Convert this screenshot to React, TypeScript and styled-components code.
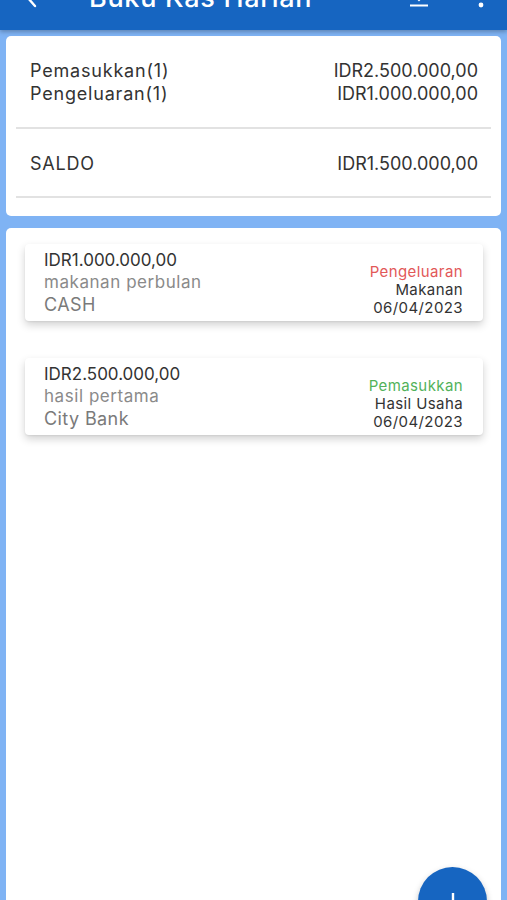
import styled, { createGlobalStyle } from 'styled-components'

const GlobalStyle = createGlobalStyle`
  html, body {
    margin: 0;
    padding: 0;
    height: 100%;
    overflow: hidden;
  }
  body {
    background: #7fb3f4;
    font-family: Inter, "Noto Sans", sans-serif;
    color: #333333;
  }
`

const AppBar = styled.header`
  height: 64px;
  margin-top: -34px;
  background: #1665c1;
  display: flex;
  align-items: center;
  padding: 0 14px 0 20px;
  box-shadow: 0 2px 4px rgba(0, 0, 0, 0.25);
  color: #ffffff;
  position: relative;
  z-index: 2;

  h1 {
    flex: 1;
    margin: 0 0 0 45px;
    font-size: 27px;
    font-weight: 500;
    letter-spacing: 0.7px;
    line-height: 30px;
  }
`

const IconButton = styled.span<{ $gap?: number }>`
  display: flex;
  width: 24px;
  height: 24px;
  margin-left: ${(p) => p.$gap ?? 0}px;
`

const Page = styled.main`
  padding: 6px 6px 0;
  display: flex;
  flex-direction: column;
  gap: 12px;
`

const Card = styled.section`
  background: #ffffff;
  border-radius: 5px;
  padding: 0 10px;
`

const SummaryBlock = styled.div<{ $last?: boolean }>`
  padding: 23px 13px ${(p) => (p.$last ? 21 : 22)}px 14px;
  border-bottom: 2px solid #e2e2e2;
  margin-bottom: ${(p) => (p.$last ? 18 : 0)}px;
`

const SummaryRow = styled.div`
  display: flex;
  justify-content: space-between;
  font-size: 18px;
  line-height: 23px;
  color: #333333;
`

const Label = styled.span`
  letter-spacing: 0.8px;
`

const ListCard = styled(Card)`
  padding: 16px 18px 0 19px;
  min-height: 720px;
  display: flex;
  flex-direction: column;
  gap: 37px;
`

const Item = styled.article`
  display: flex;
  justify-content: space-between;
  align-items: flex-end;
  padding: 5px 20px 5px 19px;
  border-radius: 4px;
  background: #ffffff;
  box-shadow: 0 4px 8px rgba(0, 0, 0, 0.18), 0 1px 2px rgba(0, 0, 0, 0.06);
`

const ItemLeft = styled.div`
  display: flex;
  flex-direction: column;
`

const Amount = styled.span`
  font-size: 17px;
  line-height: 22px;
  color: #333333;
`

const Note = styled.span`
  font-size: 17px;
  line-height: 22px;
  letter-spacing: 0.55px;
  color: #8a8a8a;
`

const Account = styled.span`
  font-size: 18px;
  line-height: 23px;
  letter-spacing: 0.4px;
  color: #7a7a7a;
`

const ItemRight = styled.div`
  display: flex;
  flex-direction: column;
  align-items: flex-end;
  font-size: 15px;
  line-height: 18px;
  letter-spacing: 0.4px;
  margin-bottom: -1px;
`

const Kind = styled.span<{ $income?: boolean }>`
  color: ${(p) => (p.$income ? '#52b25a' : '#e25858')};
`

const Fab = styled.button`
  position: fixed;
  right: 20px;
  bottom: -36px;
  width: 69px;
  height: 69px;
  border-radius: 50%;
  border: none;
  background: #1665c1;
  display: flex;
  align-items: center;
  justify-content: center;
  box-shadow: 0 3px 6px rgba(0, 0, 0, 0.25);
`

const transactions = [
  {
    id: 1,
    amount: 'IDR1.000.000,00',
    note: 'makanan perbulan',
    account: 'CASH',
    income: false,
    category: 'Makanan',
    date: '06/04/2023',
  },
  {
    id: 2,
    amount: 'IDR2.500.000,00',
    note: 'hasil pertama',
    account: 'City Bank',
    income: true,
    category: 'Hasil Usaha',
    date: '06/04/2023',
  },
]

export default function App() {
  return (
    <>
      <GlobalStyle />
      <AppBar>
        <IconButton>
          <svg width="24" height="24" viewBox="0 0 24 24" fill="none" stroke="#fff" strokeWidth="2.4" strokeLinecap="round">
            <path d="M15 4 L8 12 L15 20" />
          </svg>
        </IconButton>
        <h1>Buku Kas Harian</h1>
        <IconButton>
          <svg width="24" height="24" viewBox="0 0 24 24" fill="none" stroke="#fff" strokeWidth="2">
            <path d="M12 2 V14 M7 9 L12 14 L17 9 M3 19.5 H21" />
          </svg>
        </IconButton>
        <IconButton $gap={38}>
          <svg width="24" height="24" viewBox="0 0 24 24" fill="#fff">
            <circle cx="12" cy="4" r="2.4" />
            <circle cx="12" cy="11.5" r="2.4" />
            <circle cx="12" cy="19" r="2.4" />
          </svg>
        </IconButton>
      </AppBar>
      <Page>
        <Card>
          <SummaryBlock>
            <SummaryRow>
              <Label>Pemasukkan(1)</Label>
              <span>IDR2.500.000,00</span>
            </SummaryRow>
            <SummaryRow>
              <Label>Pengeluaran(1)</Label>
              <span>IDR1.000.000,00</span>
            </SummaryRow>
          </SummaryBlock>
          <SummaryBlock $last>
            <SummaryRow>
              <Label>SALDO</Label>
              <span>IDR1.500.000,00</span>
            </SummaryRow>
          </SummaryBlock>
        </Card>
        <ListCard>
          {transactions.map((t) => (
            <Item key={t.id}>
              <ItemLeft>
                <Amount>{t.amount}</Amount>
                <Note>{t.note}</Note>
                <Account>{t.account}</Account>
              </ItemLeft>
              <ItemRight>
                <Kind $income={t.income}>{t.income ? 'Pemasukkan' : 'Pengeluaran'}</Kind>
                <span>{t.category}</span>
                <span>{t.date}</span>
              </ItemRight>
            </Item>
          ))}
        </ListCard>
      </Page>
      <Fab>
        <svg width="24" height="24" viewBox="0 0 24 24" stroke="#fff" strokeWidth="2.4">
          <path d="M12 3 V21 M3 12 H21" />
        </svg>
      </Fab>
    </>
  )
}
